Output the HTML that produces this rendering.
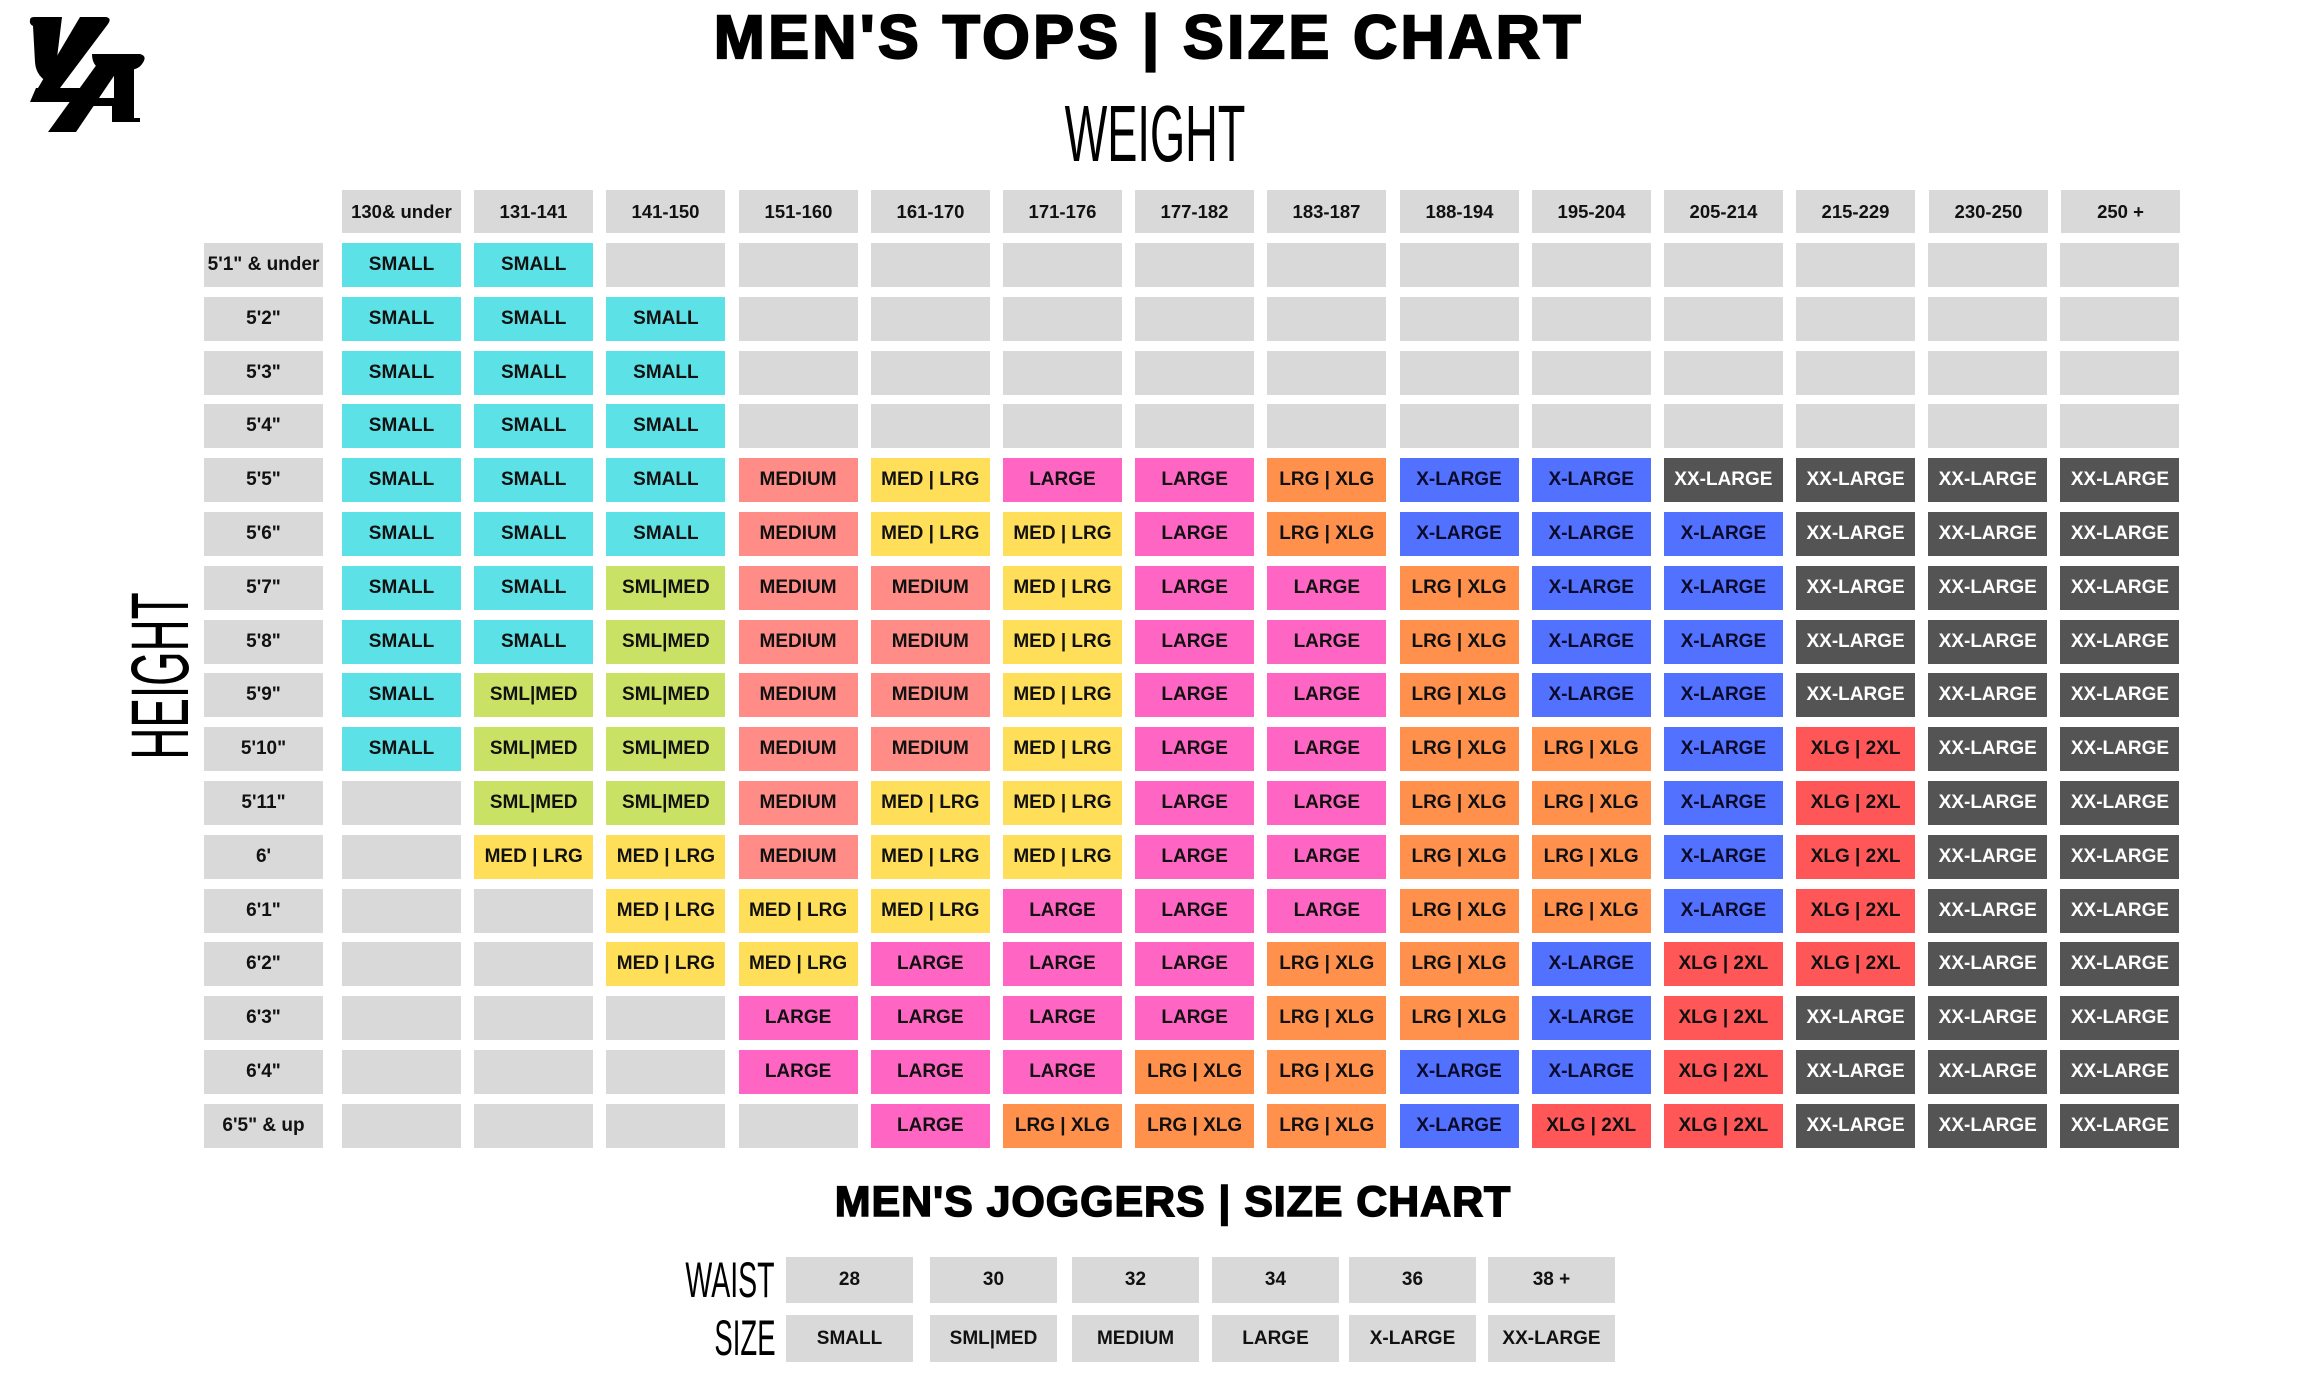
<!DOCTYPE html>
<html><head><meta charset="utf-8"><style>
*{margin:0;padding:0;box-sizing:border-box}
body{width:2300px;height:1378px;background:#fff;position:relative;overflow:hidden;font-family:"Liberation Sans",sans-serif}
.c{position:absolute;width:119px;height:44px;display:flex;align-items:center;justify-content:center;font-weight:bold;font-size:19px;color:#111;background:#d9d9d9}
.h{font-size:18.5px}
.S{background:#5ce1e6}.SM{background:#c9e265}.M{background:#ff8c86}.ML{background:#ffde59}.L{background:#ff66c4}.LX{background:#ff914d}.X{background:#5271ff;color:#0a0a2a}.R{background:#ff5757}.D{background:#545454;color:#fff}
.t{position:absolute;white-space:nowrap;color:#000}
.t span{display:inline-block}
.r{position:absolute;left:204px;display:flex;height:44px}
.r .c{position:static;margin-right:13.2px}
.r .lab{width:119px;margin-right:19px}
</style></head><body>
<svg style="position:absolute;left:0;top:0" width="160" height="150" viewBox="0 0 160 150">
<g fill="#000">
<path d="M30,20 Q30,17 34,17 L62,17 L57,58 Q56,68 66,70 L52,84 Q36,78 35,62 L33,26 Q29,24 30,20Z"/>
<path d="M80,17 L106,17 Q112,18 108,24 L60,88 L38,88Z"/>
<path d="M92,54 L140,54 Q148,56 142,64 Q138,70 128,70 L102,70 Q92,66 92,54Z"/>
<path d="M100,60 L122,64 L76,132 L48,132Z"/>
<path d="M114,68 L134,68 L134,118 L140,118 L140,122 L112,122 L112,106 L88,106 L94,98 L114,98Z"/>
<path d="M36,88 L104,88 L96,102 L30,102Z"/>
</g></svg>
<div class="t" style="left:0;width:2300px;text-align:center;top:2px;font-size:61px;font-weight:bold;-webkit-text-stroke:2.2px #000;letter-spacing:3.5px"><span style="position:relative;left:-1px">MEN'S TOPS | SIZE CHART</span></div>
<div class="t" style="left:1155px;top:84px;font-size:80px;line-height:100px"><span style="position:absolute;left:0;transform:translateX(-50%) scaleX(0.565);transform-origin:50% 0">WEIGHT</span></div>
<div class="t" style="left:161px;top:676px;font-size:82px;line-height:80px"><span style="position:absolute;left:0;top:0;transform:rotate(-90deg) scaleX(0.54) translate(-50%,-50%);transform-origin:0 0">HEIGHT</span></div>

<div class="c h" style="left:342px;top:190px;height:43px">130&amp; under</div>
<div class="c h" style="left:474px;top:190px;height:43px">131-141</div>
<div class="c h" style="left:606px;top:190px;height:43px">141-150</div>
<div class="c h" style="left:739px;top:190px;height:43px">151-160</div>
<div class="c h" style="left:871px;top:190px;height:43px">161-170</div>
<div class="c h" style="left:1003px;top:190px;height:43px">171-176</div>
<div class="c h" style="left:1135px;top:190px;height:43px">177-182</div>
<div class="c h" style="left:1267px;top:190px;height:43px">183-187</div>
<div class="c h" style="left:1400px;top:190px;height:43px">188-194</div>
<div class="c h" style="left:1532px;top:190px;height:43px">195-204</div>
<div class="c h" style="left:1664px;top:190px;height:43px">205-214</div>
<div class="c h" style="left:1796px;top:190px;height:43px">215-229</div>
<div class="c h" style="left:1929px;top:190px;height:43px">230-250</div>
<div class="c h" style="left:2061px;top:190px;height:43px">250 +</div>

<div class="r" style="top:243px"><div class="c lab">5'1" &amp; under</div><div class="c S">SMALL</div><div class="c S">SMALL</div><div class="c"></div><div class="c"></div><div class="c"></div><div class="c"></div><div class="c"></div><div class="c"></div><div class="c"></div><div class="c"></div><div class="c"></div><div class="c"></div><div class="c"></div><div class="c"></div></div>
<div class="r" style="top:297px"><div class="c lab">5'2"</div><div class="c S">SMALL</div><div class="c S">SMALL</div><div class="c S">SMALL</div><div class="c"></div><div class="c"></div><div class="c"></div><div class="c"></div><div class="c"></div><div class="c"></div><div class="c"></div><div class="c"></div><div class="c"></div><div class="c"></div><div class="c"></div></div>
<div class="r" style="top:351px"><div class="c lab">5'3"</div><div class="c S">SMALL</div><div class="c S">SMALL</div><div class="c S">SMALL</div><div class="c"></div><div class="c"></div><div class="c"></div><div class="c"></div><div class="c"></div><div class="c"></div><div class="c"></div><div class="c"></div><div class="c"></div><div class="c"></div><div class="c"></div></div>
<div class="r" style="top:404px"><div class="c lab">5'4"</div><div class="c S">SMALL</div><div class="c S">SMALL</div><div class="c S">SMALL</div><div class="c"></div><div class="c"></div><div class="c"></div><div class="c"></div><div class="c"></div><div class="c"></div><div class="c"></div><div class="c"></div><div class="c"></div><div class="c"></div><div class="c"></div></div>
<div class="r" style="top:458px"><div class="c lab">5'5"</div><div class="c S">SMALL</div><div class="c S">SMALL</div><div class="c S">SMALL</div><div class="c M">MEDIUM</div><div class="c ML">MED | LRG</div><div class="c L">LARGE</div><div class="c L">LARGE</div><div class="c LX">LRG | XLG</div><div class="c X">X-LARGE</div><div class="c X">X-LARGE</div><div class="c D">XX-LARGE</div><div class="c D">XX-LARGE</div><div class="c D">XX-LARGE</div><div class="c D">XX-LARGE</div></div>
<div class="r" style="top:512px"><div class="c lab">5'6"</div><div class="c S">SMALL</div><div class="c S">SMALL</div><div class="c S">SMALL</div><div class="c M">MEDIUM</div><div class="c ML">MED | LRG</div><div class="c ML">MED | LRG</div><div class="c L">LARGE</div><div class="c LX">LRG | XLG</div><div class="c X">X-LARGE</div><div class="c X">X-LARGE</div><div class="c X">X-LARGE</div><div class="c D">XX-LARGE</div><div class="c D">XX-LARGE</div><div class="c D">XX-LARGE</div></div>
<div class="r" style="top:566px"><div class="c lab">5'7"</div><div class="c S">SMALL</div><div class="c S">SMALL</div><div class="c SM">SML|MED</div><div class="c M">MEDIUM</div><div class="c M">MEDIUM</div><div class="c ML">MED | LRG</div><div class="c L">LARGE</div><div class="c L">LARGE</div><div class="c LX">LRG | XLG</div><div class="c X">X-LARGE</div><div class="c X">X-LARGE</div><div class="c D">XX-LARGE</div><div class="c D">XX-LARGE</div><div class="c D">XX-LARGE</div></div>
<div class="r" style="top:620px"><div class="c lab">5'8"</div><div class="c S">SMALL</div><div class="c S">SMALL</div><div class="c SM">SML|MED</div><div class="c M">MEDIUM</div><div class="c M">MEDIUM</div><div class="c ML">MED | LRG</div><div class="c L">LARGE</div><div class="c L">LARGE</div><div class="c LX">LRG | XLG</div><div class="c X">X-LARGE</div><div class="c X">X-LARGE</div><div class="c D">XX-LARGE</div><div class="c D">XX-LARGE</div><div class="c D">XX-LARGE</div></div>
<div class="r" style="top:673px"><div class="c lab">5'9"</div><div class="c S">SMALL</div><div class="c SM">SML|MED</div><div class="c SM">SML|MED</div><div class="c M">MEDIUM</div><div class="c M">MEDIUM</div><div class="c ML">MED | LRG</div><div class="c L">LARGE</div><div class="c L">LARGE</div><div class="c LX">LRG | XLG</div><div class="c X">X-LARGE</div><div class="c X">X-LARGE</div><div class="c D">XX-LARGE</div><div class="c D">XX-LARGE</div><div class="c D">XX-LARGE</div></div>
<div class="r" style="top:727px"><div class="c lab">5'10"</div><div class="c S">SMALL</div><div class="c SM">SML|MED</div><div class="c SM">SML|MED</div><div class="c M">MEDIUM</div><div class="c M">MEDIUM</div><div class="c ML">MED | LRG</div><div class="c L">LARGE</div><div class="c L">LARGE</div><div class="c LX">LRG | XLG</div><div class="c LX">LRG | XLG</div><div class="c X">X-LARGE</div><div class="c R">XLG | 2XL</div><div class="c D">XX-LARGE</div><div class="c D">XX-LARGE</div></div>
<div class="r" style="top:781px"><div class="c lab">5'11"</div><div class="c"></div><div class="c SM">SML|MED</div><div class="c SM">SML|MED</div><div class="c M">MEDIUM</div><div class="c ML">MED | LRG</div><div class="c ML">MED | LRG</div><div class="c L">LARGE</div><div class="c L">LARGE</div><div class="c LX">LRG | XLG</div><div class="c LX">LRG | XLG</div><div class="c X">X-LARGE</div><div class="c R">XLG | 2XL</div><div class="c D">XX-LARGE</div><div class="c D">XX-LARGE</div></div>
<div class="r" style="top:835px"><div class="c lab">6'</div><div class="c"></div><div class="c ML">MED | LRG</div><div class="c ML">MED | LRG</div><div class="c M">MEDIUM</div><div class="c ML">MED | LRG</div><div class="c ML">MED | LRG</div><div class="c L">LARGE</div><div class="c L">LARGE</div><div class="c LX">LRG | XLG</div><div class="c LX">LRG | XLG</div><div class="c X">X-LARGE</div><div class="c R">XLG | 2XL</div><div class="c D">XX-LARGE</div><div class="c D">XX-LARGE</div></div>
<div class="r" style="top:889px"><div class="c lab">6'1"</div><div class="c"></div><div class="c"></div><div class="c ML">MED | LRG</div><div class="c ML">MED | LRG</div><div class="c ML">MED | LRG</div><div class="c L">LARGE</div><div class="c L">LARGE</div><div class="c L">LARGE</div><div class="c LX">LRG | XLG</div><div class="c LX">LRG | XLG</div><div class="c X">X-LARGE</div><div class="c R">XLG | 2XL</div><div class="c D">XX-LARGE</div><div class="c D">XX-LARGE</div></div>
<div class="r" style="top:942px"><div class="c lab">6'2"</div><div class="c"></div><div class="c"></div><div class="c ML">MED | LRG</div><div class="c ML">MED | LRG</div><div class="c L">LARGE</div><div class="c L">LARGE</div><div class="c L">LARGE</div><div class="c LX">LRG | XLG</div><div class="c LX">LRG | XLG</div><div class="c X">X-LARGE</div><div class="c R">XLG | 2XL</div><div class="c R">XLG | 2XL</div><div class="c D">XX-LARGE</div><div class="c D">XX-LARGE</div></div>
<div class="r" style="top:996px"><div class="c lab">6'3"</div><div class="c"></div><div class="c"></div><div class="c"></div><div class="c L">LARGE</div><div class="c L">LARGE</div><div class="c L">LARGE</div><div class="c L">LARGE</div><div class="c LX">LRG | XLG</div><div class="c LX">LRG | XLG</div><div class="c X">X-LARGE</div><div class="c R">XLG | 2XL</div><div class="c D">XX-LARGE</div><div class="c D">XX-LARGE</div><div class="c D">XX-LARGE</div></div>
<div class="r" style="top:1050px"><div class="c lab">6'4"</div><div class="c"></div><div class="c"></div><div class="c"></div><div class="c L">LARGE</div><div class="c L">LARGE</div><div class="c L">LARGE</div><div class="c LX">LRG | XLG</div><div class="c LX">LRG | XLG</div><div class="c X">X-LARGE</div><div class="c X">X-LARGE</div><div class="c R">XLG | 2XL</div><div class="c D">XX-LARGE</div><div class="c D">XX-LARGE</div><div class="c D">XX-LARGE</div></div>
<div class="r" style="top:1104px"><div class="c lab">6'5" &amp; up</div><div class="c"></div><div class="c"></div><div class="c"></div><div class="c"></div><div class="c L">LARGE</div><div class="c LX">LRG | XLG</div><div class="c LX">LRG | XLG</div><div class="c LX">LRG | XLG</div><div class="c X">X-LARGE</div><div class="c R">XLG | 2XL</div><div class="c R">XLG | 2XL</div><div class="c D">XX-LARGE</div><div class="c D">XX-LARGE</div><div class="c D">XX-LARGE</div></div>

<div class="t" style="left:0;width:2346px;text-align:center;top:1178px;font-size:43px;font-weight:bold;-webkit-text-stroke:1.5px #000;letter-spacing:0.9px">MEN'S JOGGERS | SIZE CHART</div>

<div class="t" style="left:730px;top:1248px;font-size:50px;line-height:64px"><span style="position:absolute;left:0;transform:translateX(-50%) scaleX(0.57);transform-origin:50% 0">WAIST</span></div>
<div class="t" style="left:745px;top:1306px;font-size:50px;line-height:64px"><span style="position:absolute;left:0;transform:translateX(-50%) scaleX(0.55);transform-origin:50% 0">SIZE</span></div>

<div class="c" style="left:786px;top:1257px;width:127px;height:46px">28</div>
<div class="c" style="left:930px;top:1257px;width:127px;height:46px">30</div>
<div class="c" style="left:1072px;top:1257px;width:127px;height:46px">32</div>
<div class="c" style="left:1212px;top:1257px;width:127px;height:46px">34</div>
<div class="c" style="left:1349px;top:1257px;width:127px;height:46px">36</div>
<div class="c" style="left:1488px;top:1257px;width:127px;height:46px">38 +</div>
<div class="c" style="left:786px;top:1315px;width:127px;height:47px">SMALL</div>
<div class="c" style="left:930px;top:1315px;width:127px;height:47px">SML|MED</div>
<div class="c" style="left:1072px;top:1315px;width:127px;height:47px">MEDIUM</div>
<div class="c" style="left:1212px;top:1315px;width:127px;height:47px">LARGE</div>
<div class="c" style="left:1349px;top:1315px;width:127px;height:47px">X-LARGE</div>
<div class="c" style="left:1488px;top:1315px;width:127px;height:47px">XX-LARGE</div>
</body></html>
